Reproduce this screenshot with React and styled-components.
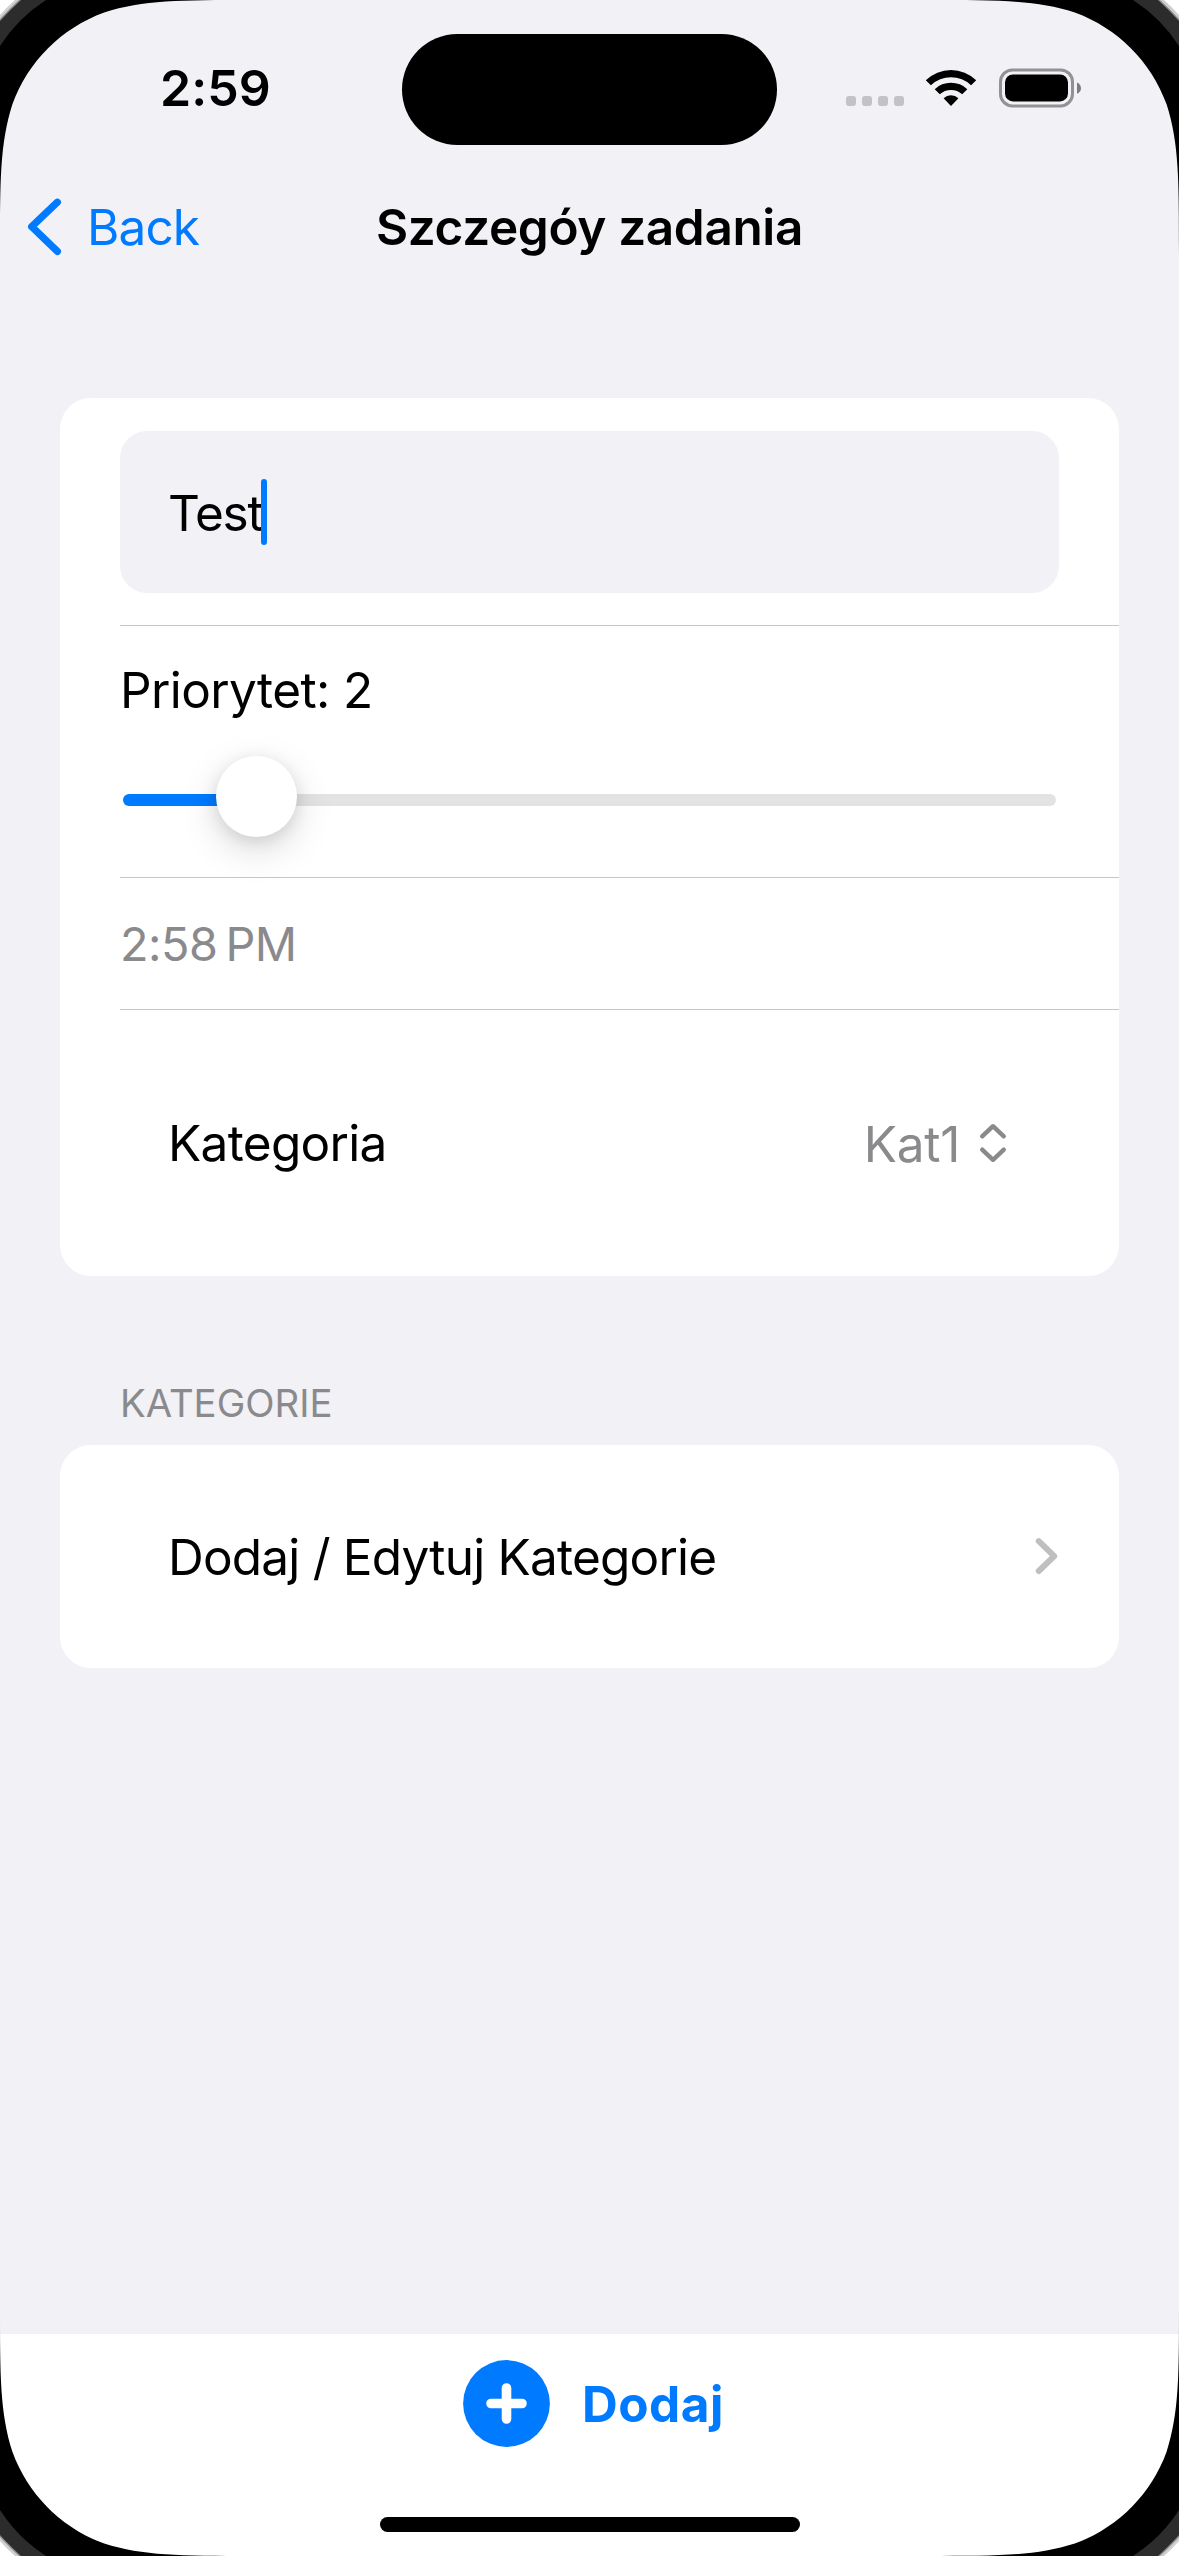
import React from "react";
import styled, { createGlobalStyle } from "styled-components";

const c = {
  blue: "#007aff",
  bg: "#f1f1f6",
  gray: "#8a8a8d",
  line: "#c6c6c8",
};

const GlobalStyle = createGlobalStyle`
  *, *::before, *::after { box-sizing: border-box; }
  body { margin: 0; background: #fff; }
`;

const Screen = styled.div`
  position: relative;
  display: flex;
  flex-direction: column;
  width: 1179px;
  height: 2556px;
  overflow: hidden;
  background: ${c.bg};
  color: #000;
  font-family: Inter, "Liberation Sans", sans-serif;
  font-size: 49.5px;
`;

const Text = styled.span`
  font-size: ${(p) => p.$size || 49.5}px;
  font-weight: ${(p) => p.$weight || 400};
  letter-spacing: ${(p) => p.$track || 0}px;
  color: ${(p) => p.$color || "inherit"};
  line-height: 60px;
  white-space: nowrap;
`;

const StatusBar = styled.div`
  display: grid;
  grid-template-columns: 402px 375px 402px;
  align-items: center;
  height: 177px;
`;

const Clock = styled.div`
  display: flex;
  padding: 0 0 2px 160px;
`;

const Island = styled.div`
  height: 111px;
  margin-top: 1px;
  border-radius: 56px;
  background: #000;
`;

const Indicators = styled.div`
  display: flex;
  align-items: center;
  padding: 0 0 1px 69px;
`;

const Dots = styled.div`
  display: flex;
  gap: 6px;
  margin-top: 25px;
`;

const Dot = styled.i`
  width: 10px;
  height: 10px;
  border-radius: 3px;
  background: #c3c2c7;
`;

const WifiIcon = styled.svg`
  width: 52px;
  height: 38px;
  margin-left: 21px;
`;

const BatteryIcon = styled.svg`
  width: 84px;
  height: 40px;
  margin-left: 21px;
`;

const NavBar = styled.nav`
  display: grid;
  grid-template-columns: 1fr auto 1fr;
  align-items: center;
  height: 100px;
`;

const BackButton = styled.div`
  display: flex;
  align-items: center;
  gap: 22px;
  padding-left: 26px;
  color: ${c.blue};
`;

const BackChevron = styled.svg`
  width: 39px;
  height: 60px;
`;

const Content = styled.main`
  flex: 1;
  display: flex;
  flex-direction: column;
  padding: 121px 60px 0;
`;

const Card = styled.section`
  border-radius: 31px;
  background: #fff;
  overflow: hidden;
`;

const Row = styled.div`
  display: flex;
  flex-direction: ${(p) => (p.$column ? "column" : "row")};
  align-items: ${(p) => (p.$column ? "stretch" : "center")};
  height: ${(p) => p.$height}px;
  margin-left: 60px;
  padding: ${(p) => p.$padding || "0 60px 0 0"};
  border-bottom: ${(p) => (p.$divided ? `1px solid ${c.line}` : "none")};
`;

const Field = styled.div`
  display: flex;
  align-items: center;
  height: 162px;
  padding: 3px 48px 0;
  border-radius: 27px;
  background: ${c.bg};
  flex: 1;
`;

const Caret = styled.i`
  width: 6px;
  height: 66px;
  margin: 0 0 3px -1px;
  border-radius: 3px;
  background: ${c.blue};
`;

const Slider = styled.div`
  display: grid;
  align-items: center;
  height: 82px;
  margin: 35px 3px 0;
`;

const Track = styled.div`
  grid-area: 1 / 1;
  height: 12px;
  margin-top: 7px;
  border-radius: 6px;
  background: linear-gradient(to right, ${c.blue} ${(p) => p.$value}%, #e3e3e4 ${(p) => p.$value}%);
`;

const Thumb = styled.div`
  grid-area: 1 / 1;
  width: 81px;
  height: 81px;
  margin-left: 93px;
  border-radius: 50%;
  background: #fff;
  box-shadow: 0 12px 38px rgba(0, 0, 0, 0.15), 0 4px 16px rgba(0, 0, 0, 0.1);
`;

const Picker = styled.div`
  display: flex;
  align-items: center;
  gap: 19px;
  margin-left: auto;
  padding-top: 2px;
`;

const SortIcon = styled.svg`
  width: 28px;
  height: 40px;
  margin-bottom: 2px;
`;

const SectionTitle = styled.div`
  display: flex;
  align-items: center;
  height: 169px;
  padding: 85px 60px 0;
`;

const Disclosure = styled.svg`
  width: 24px;
  height: 38px;
  margin: 0 1px 1px auto;
`;

const BottomBar = styled.footer`
  display: flex;
  flex-direction: column;
  align-items: center;
  justify-content: space-between;
  height: 222px;
  padding: 26px 0 24px;
  background: #fff;
`;

const AddButton = styled.div`
  display: flex;
  align-items: center;
  gap: 32px;
  padding-left: 8px;
  color: ${c.blue};
`;

const AddIcon = styled.svg`
  width: 87px;
  height: 87px;
`;

const HomeIndicator = styled.div`
  width: 420px;
  height: 15px;
  border-radius: 8px;
  background: #000;
`;

const Corner = styled.svg`
  position: absolute;
  top: ${(p) => (p.$bottom ? "auto" : 0)};
  bottom: ${(p) => (p.$bottom ? 0 : "auto")};
  left: ${(p) => (p.$right ? "auto" : 0)};
  right: ${(p) => (p.$right ? 0 : "auto")};
  width: 256px;
  height: 256px;
  transform: scale(${(p) => (p.$right ? -1 : 1)}, ${(p) => (p.$bottom ? -1 : 1)});
  pointer-events: none;
`;

function Bezel(props) {
  return (
    <Corner viewBox="0 0 256 256" {...props}>
      <path
        fill="#000"
        d="M0 0H252.2C179.6 0 143.3 0 104.2 12.4C61.5 27.9 27.9 61.5 12.4 104.2C0 143.3 0 179.6 0 252.2Z"
      />
      <path fill="#2c2c2c" d="M0 0H46Q18 18 0 46Z" />
      <path fill="#8c8c8c" d="M0 0H21Q10 10 0 21Z" />
      <path fill="#cfcfcf" d="M0 0H19Q9 9 0 19Z" />
      <path fill="#fff" d="M0 0H15Q7 7 0 15Z" />
    </Corner>
  );
}

export default function App() {
  return (
    <>
      <GlobalStyle />
      <Screen>
        <StatusBar>
          <Clock>
            <Text $size={50} $weight={600} $track={0.1}>2:59</Text>
          </Clock>
          <Island />
          <Indicators>
            <Dots>
              <Dot /><Dot /><Dot /><Dot />
            </Dots>
            <WifiIcon viewBox="0 0 52 38">
              <path d="M.8 11.2a36.3 36.3 0 0 1 50.4 0l-5.1 5.1a29 29 0 0 0-40.2 0z" />
              <path d="M9.7 20.2a23.6 23.6 0 0 1 32.6 0l-5.1 5.1a16.4 16.4 0 0 0-22.4 0z" />
              <path d="M18.6 29.2a10.8 10.8 0 0 1 14.8 0L26 37z" />
            </WifiIcon>
            <BatteryIcon viewBox="0 0 84 40">
              <rect x="2.5" y="1.9" width="72" height="36" rx="12" fill="none" stroke="#929195" strokeWidth="3" />
              <rect x="7" y="6.4" width="63" height="27" rx="8" />
              <path fill="#7d7c80" d="M79 14.6c5.3 2.3 5.3 9 0 11.2z" />
            </BatteryIcon>
          </Indicators>
        </StatusBar>
        <NavBar>
          <BackButton>
            <BackChevron viewBox="0 0 39 60" fill="none" stroke={c.blue} strokeWidth="7.2" strokeLinecap="round" strokeLinejoin="round">
              <path d="M31.4 5.2 5.7 29.7l25.7 24.7" />
            </BackChevron>
            <Text $track={-0.9}>Back</Text>
          </BackButton>
          <Text $weight={600} $track={-0.36}>Szczegóy zadania</Text>
        </NavBar>
        <Content>
          <Card>
            <Row $height={228} $divided $padding="0 60px 0 0">
              <Field>
                <Text $track={-1.2}>Test</Text>
                <Caret />
              </Field>
            </Row>
            <Row $height={252} $divided $column $padding="34px 60px 0 0">
              <Text $track={-0.6}>Priorytet: 2</Text>
              <Slider>
                <Track $value={14} />
                <Thumb />
              </Slider>
            </Row>
            <Row $height={132} $divided>
              <Text $size={46.8} $track={-0.5} $color={c.gray}>{"2:58\u2009PM"}</Text>
            </Row>
            <Row $height={266} $padding="0 112px 0 48px">
              <Text $track={-0.68}>Kategoria</Text>
              <Picker>
                <Text $track={-0.3} $color={c.gray}>Kat1</Text>
                <SortIcon viewBox="0 0 28 40" fill="none" stroke={c.gray} strokeWidth="4.4" strokeLinecap="round" strokeLinejoin="round">
                  <path d="M3.2 13.3 14 3.2l10.8 10.1M3.2 26.7 14 36.8l10.8-10.1" />
                </SortIcon>
              </Picker>
            </Row>
          </Card>
          <SectionTitle>
            <Text $size={38.3} $track={0} $color={c.gray}>KATEGORIE</Text>
          </SectionTitle>
          <Card>
            <Row $height={223} $padding="0 60px 0 48px">
              <Text $track={-0.79}>Dodaj / Edytuj Kategorie</Text>
              <Disclosure viewBox="0 0 24 38" fill="none" stroke="#bfbfc0" strokeWidth="6" strokeLinecap="round" strokeLinejoin="round">
                <path d="M4.8 4.2 20.2 19.2 4.8 34" />
              </Disclosure>
            </Row>
          </Card>
        </Content>
        <BottomBar>
          <AddButton>
            <AddIcon viewBox="0 0 87 87">
              <circle cx="43.5" cy="43.5" r="43.4" fill={c.blue} />
              <path d="M43.5 28v31M28 43.5h31" stroke="#fff" strokeWidth="9.6" strokeLinecap="round" />
            </AddIcon>
            <Text $weight={700} $track={0.5}>Dodaj</Text>
          </AddButton>
          <HomeIndicator />
        </BottomBar>
        <Bezel />
        <Bezel $right />
        <Bezel $bottom />
        <Bezel $right $bottom />
      </Screen>
    </>
  );
}
